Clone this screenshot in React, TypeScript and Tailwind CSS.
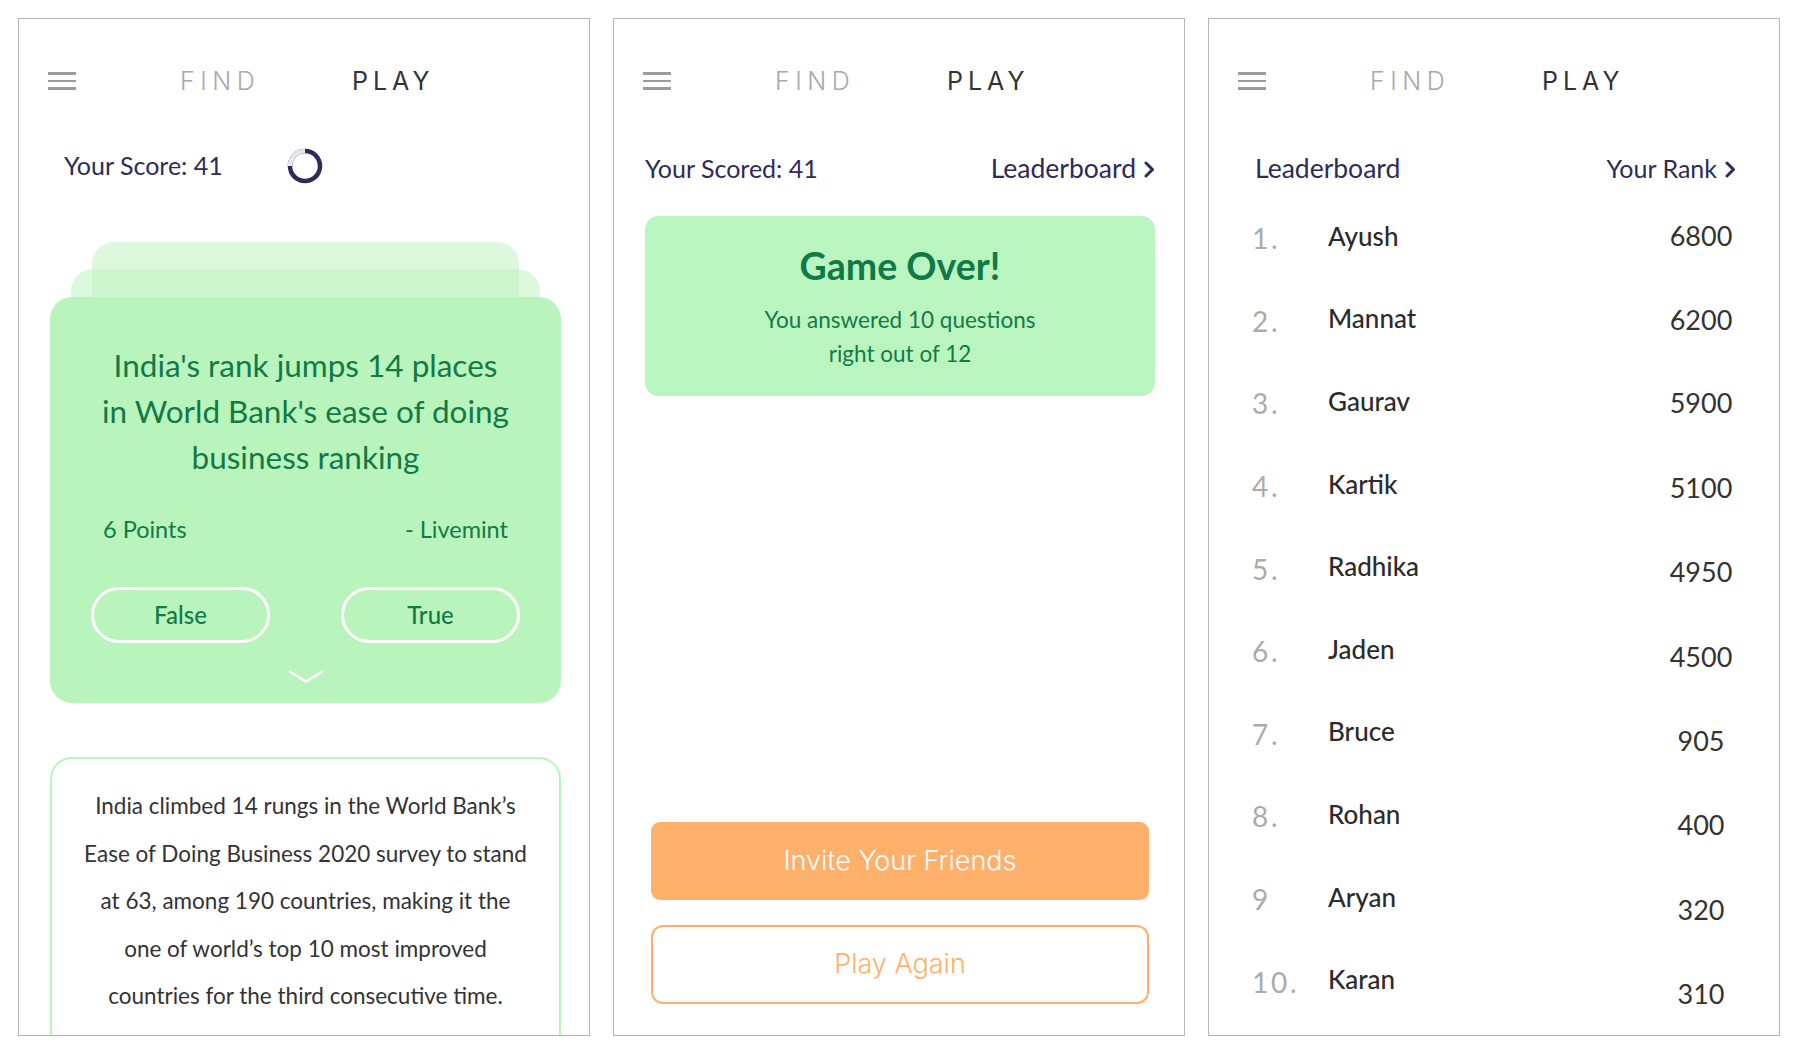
import React from "react";

const fut = "font-['Lato',sans-serif]";
const mont = "font-['Inter',sans-serif]";

function Hamburger() {
  return (
    <div className="w-[28px] flex flex-col gap-[5px]">
      <span className="block h-[2.5px] bg-[#9b9b9b]" />
      <span className="block h-[2.5px] bg-[#9b9b9b]" />
      <span className="block h-[2.5px] bg-[#9b9b9b]" />
    </div>
  );
}

function Header() {
  return (
    <div className={`flex items-center h-[26px] mt-[49px] pl-[29px] ${mont}`}>
      <Hamburger />
      <div className="w-[104px]" />
      <span className="w-[172px] text-[25px] leading-[26px] tracking-[0.22em] text-[#a9a9a9] font-light">
        FIND
      </span>
      <span className="text-[25px] leading-[26px] tracking-[0.2em] text-[#333333] font-normal">
        PLAY
      </span>
    </div>
  );
}

function Chevron({ className }: { className?: string }) {
  return (
    <svg width="11" height="17" viewBox="0 0 11 17" className={className}>
      <path d="M2 2 L8.5 8.5 L2 15" fill="none" stroke="#2d2b58" strokeWidth="3" strokeLinecap="round" strokeLinejoin="round" />
    </svg>
  );
}

function Spinner() {
  return (
    <svg width="36" height="36" viewBox="0 0 36 36">
      <circle cx="18" cy="18" r="15" fill="none" stroke="#2d2b5e" strokeWidth="4.5" />
      <path d="M3 18 A15 15 0 0 1 18 3" fill="none" stroke="#e6e6ee" strokeWidth="4.5" />
    </svg>
  );
}

function PanelFrame({ children }: { children: React.ReactNode }) {
  return (
    <div className="w-[572px] h-[1018px] shrink-0 border border-[#b5b5b5] overflow-hidden flex flex-col bg-white">
      {children}
    </div>
  );
}

function QuizPanel() {
  return (
    <PanelFrame>
      <Header />
      <div className={`mt-[55px] h-[34px] pl-[45px] flex items-center ${fut}`}>
        <span className="w-[223px] text-[25px] text-[#2d2b58]">Your Score: 41</span>
        <Spinner />
      </div>
      <div className="relative mt-[114px] ml-[31px] w-[511px] shrink-0">
        <div className="absolute top-[-55px] left-[42px] right-[42px] h-[120px] rounded-[22px] bg-[#b9f4bd]/50" />
        <div className="absolute top-[-28px] left-[21px] right-[21px] h-[120px] rounded-[22px] bg-[#b9f4bd]/50" />
        <div className={`relative h-[406px] rounded-[22px] bg-[#b9f4bd] flex flex-col ${fut}`}>
          <p className="pt-[45px] text-center text-[31.5px] leading-[46px] text-[#127a46]">
            India's rank jumps 14 places
            <br />
            in World Bank's ease of doing
            <br />
            business ranking
          </p>
          <div className="mt-[34px] px-[53px] flex justify-between text-[23.5px] leading-[30px] text-[#127a46]">
            <span>6 Points</span>
            <span>- Livemint</span>
          </div>
          <div className="mt-[43px] px-[41px] flex justify-between">
            <button className="w-[179px] h-[56px] rounded-full border-[3px] border-white text-[24px] font-medium text-[#127a46]">
              False
            </button>
            <button className="w-[179px] h-[56px] rounded-full border-[3px] border-white text-[24px] font-medium text-[#127a46]">
              True
            </button>
          </div>
          <div className="mt-[25px] flex justify-center">
            <svg width="40" height="16" viewBox="0 0 40 16">
              <path d="M3 3 L20 13.5 L37 3" fill="none" stroke="#ffffff" strokeWidth="2.6" />
            </svg>
          </div>
        </div>
      </div>
      <div className={`mt-[54px] ml-[31px] w-[511px] h-[400px] shrink-0 border-2 border-[#b9f4bd] rounded-[22px] pt-[23px] text-center text-[22.5px] leading-[47.5px] text-[#333333] ${fut}`}>
        India climbed 14 rungs in the World Bank’s
        <br />
        Ease of Doing Business 2020 survey to stand
        <br />
        at 63, among 190 countries, making it the
        <br />
        one of world’s top 10 most improved
        <br />
        countries for the third consecutive time.
      </div>
    </PanelFrame>
  );
}

function GameOverPanel() {
  return (
    <PanelFrame>
      <Header />
      <div className={`mt-[58px] h-[34px] pl-[31px] pr-[29px] flex items-center justify-between text-[25px] text-[#2d2b58] ${fut}`}>
        <span>Your Scored: 41</span>
        <span className="flex items-center gap-[8px] text-[26.5px]">
          Leaderboard
          <Chevron />
        </span>
      </div>
      <div className={`mt-[30px] ml-[31px] mr-[29px] h-[180px] rounded-[14px] bg-[#baf5bf] flex flex-col items-center ${fut}`}>
        <div className="pt-[30px] text-[37.5px] leading-[40px] font-bold text-[#0f7a47]">Game Over!</div>
        <div className="mt-[17px] text-center text-[22.5px] leading-[34px] text-[#127a46]">
          You answered 10 questions
          <br />
          right out of 12
        </div>
      </div>
      <div className={`mt-auto ml-[37px] w-[498px] flex flex-col gap-[25px] mb-[31px] ${mont}`}>
        <button className="h-[78px] rounded-[9px] bg-[#ffb06a] text-white text-[27px] font-light">
          Invite Your Friends
        </button>
        <button className="h-[79px] rounded-[12px] border-2 border-[#ffb06a] text-[#ffb06a] text-[27px] font-light">
          Play Again
        </button>
      </div>
    </PanelFrame>
  );
}

const rows: { rank: string; name: string; score: string; off: string }[] = [
  { rank: "1.", name: "Ayush", score: "6800", off: "translate-y-[0px]" },
  { rank: "2.", name: "Mannat", score: "6200", off: "translate-y-[1px]" },
  { rank: "3.", name: "Gaurav", score: "5900", off: "translate-y-[2px]" },
  { rank: "4.", name: "Kartik", score: "5100", off: "translate-y-[4px]" },
  { rank: "5.", name: "Radhika", score: "4950", off: "translate-y-[6px]" },
  { rank: "6.", name: "Jaden", score: "4500", off: "translate-y-[8px]" },
  { rank: "7.", name: "Bruce", score: "905", off: "translate-y-[9px]" },
  { rank: "8.", name: "Rohan", score: "400", off: "translate-y-[11px]" },
  { rank: "9", name: "Aryan", score: "320", off: "translate-y-[13px]" },
  { rank: "10.", name: "Karan", score: "310", off: "translate-y-[15px]" },
];

function LeaderboardPanel() {
  return (
    <PanelFrame>
      <Header />
      <div className={`mt-[58px] h-[34px] pl-[46px] pr-[43px] flex items-center justify-between text-[25px] text-[#2d2b58] ${fut}`}>
        <span className="text-[26.5px]">Leaderboard</span>
        <span className="flex items-center gap-[8px]">
          Your Rank
          <Chevron />
        </span>
      </div>
      <div className={`mt-[9px] flex flex-col ${fut}`}>
        {rows.map((r) => (
          <div key={r.name} className="h-[82.6px] flex items-center pl-[43px] pr-[28px]">
            <span className="w-[76px] text-[28px] font-normal tracking-[0.1em] text-[#ababab] translate-y-[2px]">
              {r.rank}
            </span>
            <span className="flex-1 text-[26px] font-medium text-[#2b2b2b]">{r.name}</span>
            <span className={`w-[100px] text-center text-[27px] text-[#333333] ${r.off}`}>{r.score}</span>
          </div>
        ))}
      </div>
    </PanelFrame>
  );
}

export default function App() {
  return (
    <div className="w-[1800px] h-[1055px] bg-white flex gap-[23px] pl-[18px] pt-[18px]">
      <QuizPanel />
      <GameOverPanel />
      <LeaderboardPanel />
    </div>
  );
}
